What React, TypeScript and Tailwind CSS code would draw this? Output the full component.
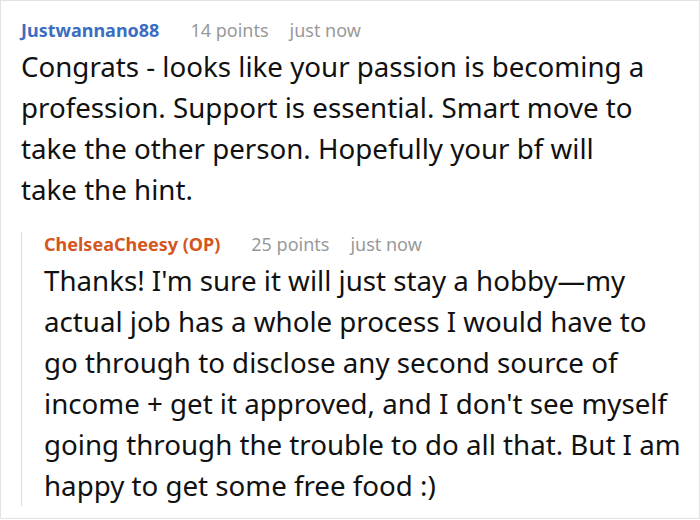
import React from "react";

export default function App() {
  const font = { fontFamily: '"Noto Sans", "DejaVu Sans", sans-serif' };
  return (
    <div
      style={font}
      className="box-border w-[700px] h-[519px] border border-[#e3e3e3] bg-white pl-[20px] pt-[17px] overflow-hidden"
    >
      <div className="flex items-baseline text-[18px] leading-[24px] whitespace-nowrap">
        <span className="font-bold text-[#3c6dc1] mr-[31px]">Justwannano88</span>
        <span className="text-[#999999] mr-[21px]">14 points</span>
        <span className="text-[#999999]">just now</span>
      </div>
      <p className="mt-[4px] text-[27.7px] leading-[41px] text-[#111111] whitespace-nowrap">
        Congrats - looks like your passion is becoming a
        <br />
        profession. Support is essential. Smart move to
        <br />
        take the other person. Hopefully your bf will
        <br />
        take the hint.
      </p>
      <div className="mt-[32px] border-l border-[#dcdcdc] pl-[22px]">
        <div className="-mt-[10px] flex items-baseline text-[18px] leading-[24px] whitespace-nowrap">
          <span className="font-bold text-[#d4561f] mr-[31px]">ChelseaCheesy (OP)</span>
          <span className="text-[#999999] mr-[21px]">25 points</span>
          <span className="text-[#999999]">just now</span>
        </div>
        <p className="mt-[4px] -mb-[4px] text-[27.7px] leading-[41px] text-[#111111] whitespace-nowrap">
          Thanks! I'm sure it will just stay a hobby—my
          <br />
          actual job has a whole process I would have to
          <br />
          go through to disclose any second source of
          <br />
          income + get it approved, and I don't see myself
          <br />
          going through the trouble to do all that. But I am
          <br />
          happy to get some free food :)
        </p>
      </div>
    </div>
  );
}
